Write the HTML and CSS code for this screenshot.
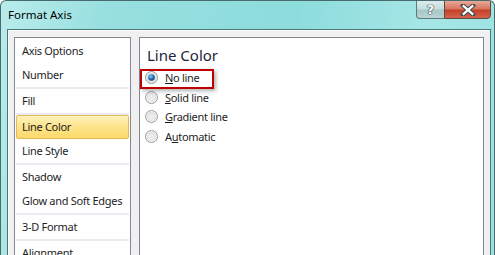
FILE: index.html
```html
<!DOCTYPE html>
<html>
<head>
<title>Format Axis</title>
<link rel="stylesheet" href="styles.css">
</head>
<body>
<div class="window">
  <div class="titlebar">
    <span class="title">Format Axis</span>
    <div class="caption-buttons">
      <span class="btn-help">?</span>
      <span class="btn-close">
        <svg width="16" height="12" viewBox="0 0 16 12">
          <path d="M3 1.5 L13 10.5 M13 1.5 L3 10.5" stroke="#3b4a50" stroke-width="4.2" stroke-linecap="square"/>
          <path d="M3.6 2.1 L12.4 9.9 M12.4 2.1 L3.6 9.9" stroke="#ffffff" stroke-width="2.2" stroke-linecap="square"/>
        </svg>
      </span>
    </div>
  </div>

  <div class="client">
    <div class="nav-list">
      <div class="nav-item">Axis Options</div>
      <div class="nav-item">Number</div>
      <div class="nav-sep"></div>
      <div class="nav-item">Fill</div>
      <div class="nav-sep"></div>
      <div class="nav-item selected">Line Color</div>
      <div class="nav-item">Line Style</div>
      <div class="nav-sep"></div>
      <div class="nav-item">Shadow</div>
      <div class="nav-item">Glow and Soft Edges</div>
      <div class="nav-sep"></div>
      <div class="nav-item">3-D Format</div>
      <div class="nav-sep"></div>
      <div class="nav-item">Alignment</div>
    </div>

    <div class="panel">
      <div class="panel-title">Line Color</div>
      <div class="options">
        <div class="option highlight">
          <svg class="radio" width="13" height="13" viewBox="0 0 13 13">
            <defs>
              <radialGradient id="dot" cx="40%" cy="35%" r="65%">
                <stop offset="0" stop-color="#9fd3f7"/>
                <stop offset="0.5" stop-color="#2f7fc4"/>
                <stop offset="1" stop-color="#13457e"/>
              </radialGradient>
            </defs>
            <circle cx="6.5" cy="6.5" r="6" fill="#f2f2f2" stroke="#8a9296"/>
            <circle cx="6.5" cy="6.5" r="4.5" fill="#dcdcdc"/>
            <circle cx="6.5" cy="6.5" r="3.3" fill="url(#dot)"/>
          </svg>
          <span><u>N</u>o line</span>
        </div>
        <div class="option">
          <svg class="radio" width="13" height="13" viewBox="0 0 13 13">
            <circle cx="6.5" cy="6.5" r="6" fill="#f4f4f4" stroke="#979da1"/>
            <circle cx="6.5" cy="6.5" r="4.5" fill="#dedede"/>
            <circle cx="6.5" cy="7" r="3.5" fill="#ececec"/>
          </svg>
          <span><u>S</u>olid line</span>
        </div>
        <div class="option">
          <svg class="radio" width="13" height="13" viewBox="0 0 13 13">
            <circle cx="6.5" cy="6.5" r="6" fill="#f4f4f4" stroke="#979da1"/>
            <circle cx="6.5" cy="6.5" r="4.5" fill="#dedede"/>
            <circle cx="6.5" cy="7" r="3.5" fill="#ececec"/>
          </svg>
          <span><u>G</u>radient line</span>
        </div>
        <div class="option">
          <svg class="radio" width="13" height="13" viewBox="0 0 13 13">
            <circle cx="6.5" cy="6.5" r="6" fill="#f4f4f4" stroke="#979da1"/>
            <circle cx="6.5" cy="6.5" r="4.5" fill="#dedede"/>
            <circle cx="6.5" cy="7" r="3.5" fill="#ececec"/>
          </svg>
          <span>A<u>u</u>tomatic</span>
        </div>
      </div>
    </div>
  </div>
</div>
</body>
</html>
```

FILE: styles.css
```css
/* Format Axis dialog, Windows 7 style */

body
{ margin: 0;
font-family: "Noto Sans", "Open Sans", sans-serif;
font-size: 11px;
letter-spacing: -0.3px;
color: #1e1e1e;
}

div.window
{ width: 495px;
height: 255px;
box-sizing: border-box;
overflow: hidden;
border: 1px solid #4a6b6e;
border-bottom: none;
border-radius: 6px 6px 0 0;
background: linear-gradient(100deg, #b9ecec 0%, #98dfdf 20%, #8ddcdc 55%, #a6e6e6 80%, #9ae1e1 100%);
display: flex;
flex-direction: column;
}

/* title bar */

div.titlebar
{ height: 28px;
display: flex;
justify-content: space-between;
align-items: flex-start;
flex-shrink: 0;
}

span.title
{ margin: 6px 0 0 7px;
font-size: 11.5px;
letter-spacing: 0;
color: #000;
}

div.caption-buttons
{ display: flex;
margin-right: 3px;
margin-top: -1px;
}

span.btn-help
{ width: 28px;
height: 19px;
box-sizing: border-box;
border: 1px solid #5b7a7c;
border-right: none;
border-radius: 0 0 0 4px;
background: linear-gradient(#dcecec 0%, #c5dede 48%, #a7c6c6 52%, #b9d4d4 100%);
text-align: center;
font-family: "DejaVu Sans", sans-serif;
font-weight: bold;
font-size: 13px;
letter-spacing: 0;
line-height: 17px;
color: #fff;
text-shadow: 0 0 1px #2d3c40, 0 0 1px #2d3c40, 0 0 1px #2d3c40;
}

span.btn-close
{ width: 47px;
height: 19px;
box-sizing: border-box;
border: 1px solid #5b4a44;
border-radius: 0 0 4px 0;
background: linear-gradient(#e9a999 0%, #d9775f 45%, #c4402a 55%, #d5644a 100%);
display: flex;
align-items: center;
justify-content: center;
}

/* client area */

div.client
{ flex: 1;
margin: 0 3px 0 6px;
border: 1px solid #477777;
border-bottom: none;
box-shadow: inset 1px 1px 0 #ffffff;
background-color: #f0f0f0;
padding: 7px 6px 0 6px;
display: flex;
gap: 8px;
}

div.nav-list
{ width: 113px;
flex-shrink: 0;
border: 1px solid #828790;
border-bottom: none;
background-color: #fff;
padding: 1px 1px 0 1px;
}

div.nav-item
{ height: 24px;
line-height: 24px;
padding-left: 6px;
white-space: nowrap;
}

div.nav-item.selected
{ box-sizing: border-box;
border: 1px solid #e4b85a;
border-radius: 2px;
padding-left: 5px;
line-height: 22px;
background: linear-gradient(#fff2bd 0%, #fde58f 45%, #fcd969 100%);
}

div.nav-sep
{ height: 2px;
background-color: #eaebf0;
}

div.panel
{ flex: 1;
border: 1px solid #828790;
border-bottom: none;
background-color: #fff;
padding: 5px 6px 0 5px;
}

div.panel-title
{ font-size: 15px;
letter-spacing: 0;
color: #1e1e3c;
height: 24px;
line-height: 24px;
margin-left: 2px;
}

div.options
{ display: flex;
flex-direction: column;
margin-top: 1px;
}

div.option
{ height: 19.5px;
display: flex;
align-items: center;
gap: 7px;
white-space: nowrap;
}

div.option.highlight
{ position: relative;
}

div.option.highlight::after
{ content: "";
position: absolute;
left: -5px;
top: 1px;
width: 70px;
height: 16px;
border: 2px solid #c00000;
box-shadow: 2px 2px 4px rgba(0,0,0,0.3);
}

svg.radio
{ flex-shrink: 0;
}
```
